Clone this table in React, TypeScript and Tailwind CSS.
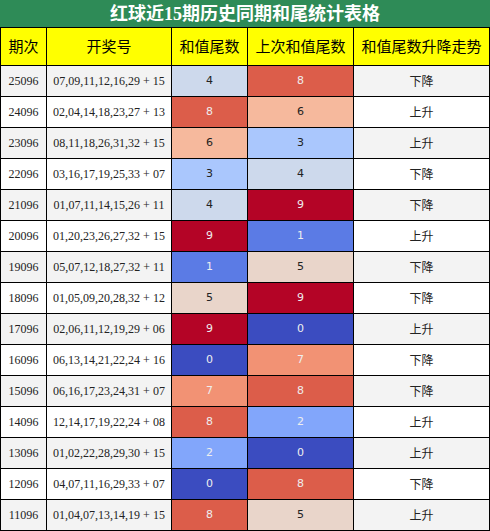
import React from "react";

const rows: [string, string, number, number, string][] = [
  ["25096", "07,09,11,12,16,29 + 15", 4, 8, "下降"],
  ["24096", "02,04,14,18,23,27 + 13", 8, 6, "上升"],
  ["23096", "08,11,18,26,31,32 + 15", 6, 3, "上升"],
  ["22096", "03,16,17,19,25,33 + 07", 3, 4, "下降"],
  ["21096", "01,07,11,14,15,26 + 11", 4, 9, "下降"],
  ["20096", "01,20,23,26,27,32 + 15", 9, 1, "上升"],
  ["19096", "05,07,12,18,27,32 + 11", 1, 5, "下降"],
  ["18096", "01,05,09,20,28,32 + 12", 5, 9, "下降"],
  ["17096", "02,06,11,12,19,29 + 06", 9, 0, "上升"],
  ["16096", "06,13,14,21,22,24 + 16", 0, 7, "下降"],
  ["15096", "06,16,17,23,24,31 + 07", 7, 8, "下降"],
  ["14096", "12,14,17,19,22,24 + 08", 8, 2, "上升"],
  ["13096", "01,02,22,28,29,30 + 15", 2, 0, "上升"],
  ["12096", "04,07,11,16,29,33 + 07", 0, 8, "下降"],
  ["11096", "01,04,07,13,14,19 + 15", 8, 5, "上升"],
];

const cellBg: Record<number, string> = {
  0: "bg-[#3b4cc0] text-[#eeeeee]",
  1: "bg-[#5b7be5] text-[#eeeeee]",
  2: "bg-[#82a6fb] text-[#eeeeee]",
  3: "bg-[#aac7fd] text-[#222222]",
  4: "bg-[#cdd9ec] text-[#222222]",
  5: "bg-[#e9d5ca] text-[#222222]",
  6: "bg-[#f6b99d] text-[#222222]",
  7: "bg-[#f29274] text-[#eeeeee]",
  8: "bg-[#dc5d4a] text-[#eeeeee]",
  9: "bg-[#b40426] text-[#eeeeee]",
};

const serif = "font-['Liberation_Serif','Noto_Sans_CJK_SC',serif]";
const cjk = "font-['Noto_Sans_CJK_SC','DejaVu_Sans',sans-serif]";
const dv = "font-['DejaVu_Sans',sans-serif]";

export default function App() {
  return (
    <div className="w-[490px] h-[531px] bg-white">
      <div
        className={`h-[27px] bg-[#2e8b57] text-white text-[18px] font-bold flex items-center justify-center leading-none ${serif}`}
      >
        红球近15期历史同期和尾统计表格
      </div>
      <div className="grid grid-cols-[46px_125px_76px_106px_136px] border-r border-b border-black">
        {["期次", "开奖号", "和值尾数", "上次和值尾数", "和值尾数升降走势"].map((h) => (
          <div
            key={h}
            className={`h-[38px] border-l border-t border-black bg-[#ffff00] text-black text-[15px] flex items-center justify-center ${cjk}`}
          >
            {h}
          </div>
        ))}
        {rows.map((r, i) => {
          const rowBg = i % 2 === 0 ? "bg-[#f3f3f3]" : "bg-white";
          return (
            <React.Fragment key={r[0]}>
              <div
                className={`h-[31px] border-l border-t border-black ${rowBg} text-[#222] text-[12px] flex items-center justify-center ${serif}`}
              >
                {r[0]}
              </div>
              <div
                className={`h-[31px] border-l border-t border-black ${rowBg} text-[#222] text-[12px] flex items-center justify-center ${serif}`}
              >
                {r[1]}
              </div>
              <div
                className={`h-[31px] border-l border-t border-black ${cellBg[r[2]]} text-[11px] flex items-center justify-center ${dv}`}
              >
                {r[2]}
              </div>
              <div
                className={`h-[31px] border-l border-t border-black ${cellBg[r[3]]} text-[11px] flex items-center justify-center ${dv}`}
              >
                {r[3]}
              </div>
              <div
                className={`h-[31px] border-l border-t border-black ${rowBg} text-[#222] text-[12px] flex items-center justify-center ${cjk}`}
              >
                {r[4]}
              </div>
            </React.Fragment>
          );
        })}
      </div>
    </div>
  );
}
